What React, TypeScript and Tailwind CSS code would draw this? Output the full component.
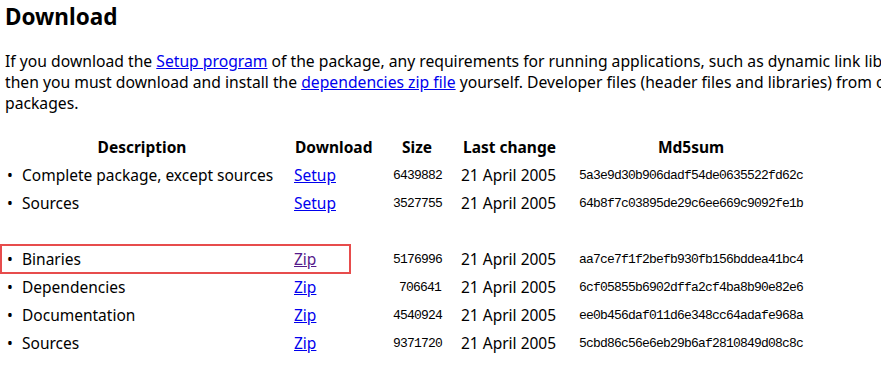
import React from "react";

type Row = {
  desc: string;
  link: string;
  visited?: boolean;
  size: string;
  date: string;
  md5: string;
} | null;

const rows: Row[] = [
  { desc: "Complete package, except sources", link: "Setup", size: "6439882", date: "21 April 2005", md5: "5a3e9d30b906dadf54de0635522fd62c" },
  { desc: "Sources", link: "Setup", size: "3527755", date: "21 April 2005", md5: "64b8f7c03895de29c6ee669c9092fe1b" },
  null,
  { desc: "Binaries", link: "Zip", visited: true, size: "5176996", date: "21 April 2005", md5: "aa7ce7f1f2befb930fb156bddea41bc4" },
  { desc: "Dependencies", link: "Zip", size: "706641", date: "21 April 2005", md5: "6cf05855b6902dffa2cf4ba8b90e82e6" },
  { desc: "Documentation", link: "Zip", size: "4540924", date: "21 April 2005", md5: "ee0b456daf011d6e348cc64adafe968a" },
  { desc: "Sources", link: "Zip", size: "9371720", date: "21 April 2005", md5: "5cbd86c56e6eb29b6af2810849d08c8c" },
];

const cols = "grid grid-cols-[294px_99px_68px_118px_260px] h-[28px] items-center";
const mono = "font-['Liberation_Mono',monospace] text-[13px] tracking-[-0.8px]";

export default function App() {
  return (
    <div className="relative w-[881px] h-[371px] overflow-hidden bg-white text-black font-['Noto_Sans',sans-serif]">
      <h1 className="pl-[5px] text-[22.5px] leading-[33px] font-bold">Download</h1>

      <p className="mt-[18px] pl-[5px] text-[15.7px] leading-[21px] whitespace-nowrap">
        If you download the{" "}
        <a href="#" className="text-[#0000ee] underline">Setup program</a> of the package, any requirements for running
        applications, such as dynamic link libraries (DLL's) from the dependencies as listed below under Requirements, are
        already included.
        <br />
        then you must download and install the{" "}
        <a href="#" className="text-[#0000ee] underline">dependencies zip file</a> yourself. Developer files (header files
        and libraries) from other packages are however not included.
        <br />
        packages.
      </p>

      <div className="mt-[20px] text-[15.5px]">
        <div className={`${cols} font-bold`}>
          <div className="pr-[10px] text-center">Description</div>
          <div className="pl-[1px]">Download</div>
          <div className="pr-[20px] text-center">Size</div>
          <div className="pr-[21px] text-center">Last change</div>
          <div className="w-[224px] text-center">Md5sum</div>
        </div>

        {rows.map((r, i) =>
          r ? (
            <div key={i} className={cols}>
              <div className="flex items-center">
                <span className="w-[22px] pl-[7px]">•</span>
                <span>{r.desc}</span>
              </div>
              <div>
                <a href="#" className={`${r.visited ? "text-[#551a8b]" : "text-[#0000ee]"} underline`}>
                  {r.link}
                </a>
              </div>
              <div className={`pr-[20px] text-right ${mono}`}>{r.size}</div>
              <div>{r.date}</div>
              <div className={mono}>{r.md5}</div>
            </div>
          ) : (
            <div key={i} className="h-[28px]" />
          )
        )}
      </div>

      <div className="absolute left-0 top-[244px] w-[351px] h-[30px] border-2 border-[#e74c4c]" />
    </div>
  );
}
